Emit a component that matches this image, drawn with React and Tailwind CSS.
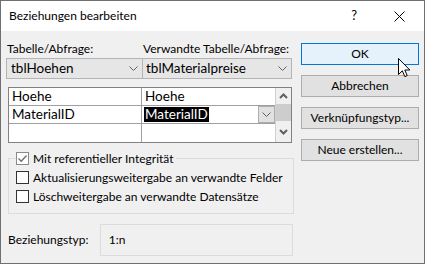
import React from 'react';

const font = { fontFamily: 'Lato, "Noto Sans", sans-serif' };

function Chevron({ className = '' }) {
  return (
    <svg width="9" height="5" viewBox="0 0 9 5" className={className}>
      <path d="M0.5 0.5 L4.5 4.5 L8.5 0.5" fill="none" stroke="#606060" strokeWidth="1" />
    </svg>
  );
}

function ScrollArrow({ down }) {
  return (
    <svg width="9" height="6" viewBox="0 0 9 6">
      <path d={down ? 'M1 1 L4.5 4.5 L8 1' : 'M1 5 L4.5 1.5 L8 5'} fill="none" stroke="#606060" strokeWidth="2" />
    </svg>
  );
}

function Check({ checked, dim }) {
  return (
    <div className={`w-[13px] h-[13px] shrink-0 border bg-white flex items-center justify-center ${dim ? 'border-[#8a8a8a]' : 'border-[#333]'}`}>
      {checked && (
        <svg width="11" height="11" viewBox="0 0 11 11">
          <path d="M1.5 5.5 L4.2 8.3 L9.5 2.5" fill="none" stroke="#6d6d6d" strokeWidth="1.3" />
        </svg>
      )}
    </div>
  );
}

function Btn({ children, primary }) {
  return (
    <div className={`h-[22px] flex items-center justify-center border text-[12px] text-black whitespace-nowrap ${primary ? 'bg-[#e5f1fb] border-[#0078d7]' : 'bg-[#e1e1e1] border-[#adadad]'}`}>
      {children}
    </div>
  );
}

export default function App() {
  return (
    <div className="relative w-[425px] h-[264px] border border-[#707070] bg-[#f0f0f0] flex flex-col text-[12px] text-black overflow-hidden whitespace-nowrap" style={font}>
      {/* Titelleiste */}
      <div className="h-[30px] bg-white flex items-center shrink-0">
        <span className="pl-[8px] text-[12px]">Beziehungen bearbeiten</span>
        <span className="ml-auto mr-[37px] text-[13px]">?</span>
        <svg width="11" height="11" viewBox="0 0 11 11" className="mr-[19px]">
          <path d="M0.5 0.5 L10.5 10.5 M10.5 0.5 L0.5 10.5" stroke="#000" strokeWidth="1" />
        </svg>
      </div>

      <div className="flex flex-1">
        {/* linke Spalte */}
        <div className="w-[292px] pl-[5px] pt-[10px] flex flex-col">
          <div className="flex h-[16px] leading-[16px] text-[12px]">
            <span className="w-[136px] pl-px">Tabelle/Abfrage:</span>
            <span className="pl-px">Verwandte Tabelle/Abfrage:</span>
          </div>
          <div className="flex mt-px text-[13.5px]">
            <div className="w-[137px] h-[21px] border border-[#b4b4b4] bg-[#e6e6e6] flex items-center pl-[4px] pr-[4px]">
              <span>tblHoehen</span>
              <Chevron className="ml-auto" />
            </div>
            <div className="w-[149px] h-[21px] border border-l-0 border-[#b4b4b4] bg-[#e6e6e6] flex items-center pl-[3px] pr-[4px]">
              <span>tblMaterialpreise</span>
              <Chevron className="ml-auto" />
            </div>
          </div>

          {/* Feldzuordnung */}
          <div className="mt-[8px] ml-[2px] w-[284px] h-[56px] border border-[#828282] bg-white flex text-[13.5px]">
            <div className="w-[266px] flex flex-col">
              <div className="flex h-[18px] border-b border-[#a0a0a0]">
                <div className="w-[133px] border-r border-[#a0a0a0] pl-[3px] flex items-center">Hoehe</div>
                <div className="flex-1 pl-[3px] flex items-center">Hoehe</div>
              </div>
              <div className="flex h-[18px] border-b border-[#a0a0a0]">
                <div className="w-[133px] border-r border-[#a0a0a0] pl-[3px] flex items-center">MaterialID</div>
                <div className="flex-1 pl-[2px] flex items-center">
                  <span className="bg-black text-white leading-[15px] px-px">MaterialID</span>
                  <div className="ml-auto w-[17px] h-[17px] border border-[#adadad] bg-[#e1e1e1] flex items-center justify-center">
                    <Chevron />
                  </div>
                </div>
              </div>
              <div className="flex flex-1">
                <div className="w-[133px] border-r border-[#a0a0a0]"></div>
                <div className="flex-1"></div>
              </div>
            </div>
            <div className="flex-1 border-l border-[#d0d0d0] bg-[#f0f0f0] flex flex-col items-center">
              <div className="h-[16px] flex items-center justify-center"><ScrollArrow /></div>
              <div className="w-full h-[17px] bg-[#cdcdcd]"></div>
              <div className="flex-1 flex items-center justify-center"><ScrollArrow down /></div>
            </div>
          </div>

          {/* Optionen */}
          <div className="mt-[15px] ml-[2px] w-[286px] h-[56px] border border-[#dcdcdc] flex flex-col">
            <div className="-mt-[10px] ml-[7px] h-[19px] flex items-center gap-[4px] w-fit bg-[#f0f0f0] pr-[2px]">
              <Check checked dim />
              <span>Mit referentieller Integrität</span>
            </div>
            <div className="ml-[7px] h-[19px] flex items-center gap-[4px]">
              <Check />
              <span>Aktualisierungsweitergabe an verwandte Felder</span>
            </div>
            <div className="ml-[7px] h-[19px] flex items-center gap-[4px]">
              <Check />
              <span>Löschweitergabe an verwandte Datensätze</span>
            </div>
          </div>

          <div className="mt-[10px] flex items-center">
            <span className="w-[94px] pl-[2px]">Beziehungstyp:</span>
            <div className="w-[194px] h-[32px] border border-[#dcdcdc] flex items-center pl-[8px]">1:n</div>
          </div>
        </div>

        {/* Schaltflächen */}
        <div className="ml-[8px] w-[118px] pt-[12px] flex flex-col gap-[10px]">
          <Btn primary>OK</Btn>
          <Btn>Abbrechen</Btn>
          <Btn>Verknüpfungstyp...</Btn>
          <Btn>Neue erstellen...</Btn>
        </div>
      </div>

      {/* Mauszeiger */}
      <svg width="13" height="20" viewBox="0 0 13 20" className="absolute left-[397px] top-[57px]">
        <path d="M0.5 0.5 L0.5 16.5 L4.3 12.8 L6.8 18.6 L9.2 17.6 L6.8 12 L11.8 12 Z" fill="#fff" stroke="#000" strokeWidth="1" />
      </svg>
    </div>
  );
}
